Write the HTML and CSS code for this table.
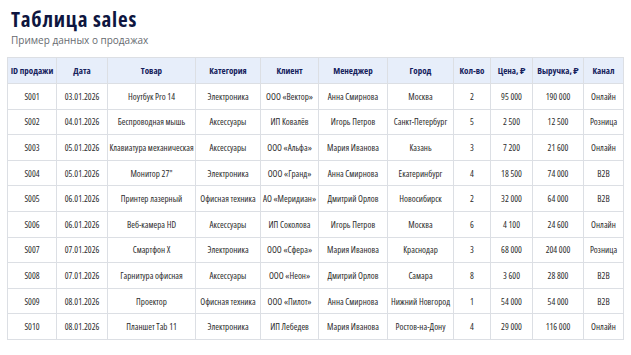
FILE: index.html
```html
<!DOCTYPE html>
<html lang="ru">
<head>
<meta charset="utf-8">
<title>Таблица sales</title>
<link rel="stylesheet" href="styles.css">
</head>
<body>
<header class="page-head">
  <h1 class="title">Таблица sales</h1>
  <p class="subtitle">Пример данных о продажах</p>
</header>
<table class="sales">
  <colgroup>
    <col class="c-id"><col class="c-date"><col class="c-item"><col class="c-cat"><col class="c-client"><col class="c-mgr"><col class="c-city"><col class="c-qty"><col class="c-price"><col class="c-rev"><col class="c-chan">
  </colgroup>
  <thead>
    <tr><th>ID продажи</th><th>Дата</th><th>Товар</th><th>Категория</th><th>Клиент</th><th>Менеджер</th><th>Город</th><th>Кол-во</th><th>Цена, ₽</th><th>Выручка, ₽</th><th>Канал</th></tr>
  </thead>
  <tbody>
    <tr><td>S001</td><td>03.01.2026</td><td>Ноутбук Pro 14</td><td>Электроника</td><td>ООО «Вектор»</td><td>Анна Смирнова</td><td>Москва</td><td>2</td><td>95 000</td><td>190 000</td><td>Онлайн</td></tr>
    <tr><td>S002</td><td>04.01.2026</td><td>Беспроводная мышь</td><td>Аксессуары</td><td>ИП Ковалёв</td><td>Игорь Петров</td><td>Санкт-Петербург</td><td>5</td><td>2 500</td><td>12 500</td><td>Розница</td></tr>
    <tr><td>S003</td><td>05.01.2026</td><td>Клавиатура механическая</td><td>Аксессуары</td><td>ООО «Альфа»</td><td>Мария Иванова</td><td>Казань</td><td>3</td><td>7 200</td><td>21 600</td><td>Онлайн</td></tr>
    <tr><td>S004</td><td>05.01.2026</td><td>Монитор 27"</td><td>Электроника</td><td>ООО «Гранд»</td><td>Анна Смирнова</td><td>Екатеринбург</td><td>4</td><td>18 500</td><td>74 000</td><td>B2B</td></tr>
    <tr><td>S005</td><td>06.01.2026</td><td>Принтер лазерный</td><td>Офисная техника</td><td>АО «Меридиан»</td><td>Дмитрий Орлов</td><td>Новосибирск</td><td>2</td><td>32 000</td><td>64 000</td><td>B2B</td></tr>
    <tr><td>S006</td><td>06.01.2026</td><td>Веб-камера HD</td><td>Аксессуары</td><td>ИП Соколова</td><td>Игорь Петров</td><td>Москва</td><td>6</td><td>4 100</td><td>24 600</td><td>Онлайн</td></tr>
    <tr><td>S007</td><td>07.01.2026</td><td>Смартфон X</td><td>Электроника</td><td>ООО «Сфера»</td><td>Мария Иванова</td><td>Краснодар</td><td>3</td><td>68 000</td><td>204 000</td><td>Розница</td></tr>
    <tr><td>S008</td><td>07.01.2026</td><td>Гарнитура офисная</td><td>Аксессуары</td><td>ООО «Неон»</td><td>Дмитрий Орлов</td><td>Самара</td><td>8</td><td>3 600</td><td>28 800</td><td>B2B</td></tr>
    <tr><td>S009</td><td>08.01.2026</td><td>Проектор</td><td>Офисная техника</td><td>ООО «Пилот»</td><td>Анна Смирнова</td><td>Нижний Новгород</td><td>1</td><td>54 000</td><td>54 000</td><td>B2B</td></tr>
    <tr><td>S010</td><td>08.01.2026</td><td>Планшет Tab 11</td><td>Электроника</td><td>ИП Лебедев</td><td>Мария Иванова</td><td>Ростов-на-Дону</td><td>4</td><td>29 000</td><td>116 000</td><td>Онлайн</td></tr>
  </tbody>
</table>
</body>
</html>
```
FILE: styles.css
```css
html, body {
  margin: 0;
  padding: 0;
  background: #ffffff;
}
body {
  font-family: "Open Sans", "Noto Sans", "DejaVu Sans", sans-serif;
  padding: 6px 0 0 0;
}
.page-head {
  padding-left: 11px;
}
.title {
  margin: 0;
  font-size: 21px;
  line-height: 26px;
  font-weight: 700;
  font-stretch: 75%;
  letter-spacing: 0.8px;
  color: #0e1640;
}
.subtitle {
  margin: 1px 0 0 0;
  font-size: 10px;
  line-height: 14px;
  color: #666a70;
}
.sales {
  margin: 10px 0 0 7px;
  width: 616px;
  table-layout: fixed;
  border-collapse: collapse;
  border: 1px solid #cfd3da;
  font-size: 9px;
  font-stretch: 75%;
  color: #2b2b2b;
}
.c-id { width: 49px; }
.c-date { width: 51px; }
.c-item { width: 88px; }
.c-cat { width: 65px; }
.c-client { width: 58px; }
.c-mgr { width: 69px; }
.c-city { width: 66px; }
.c-qty { width: 37px; }
.c-price { width: 42px; }
.c-rev { width: 51px; }
.c-chan { width: 40px; }
.sales th, .sales td {
  border: 1px solid #dcdfe4;
  padding: 0;
  text-align: center;
  white-space: nowrap;
  overflow: hidden;
}
.sales thead tr {
  height: 26px;
}
.sales th {
  background: #e7eefa;
  color: #15215c;
  font-weight: 700;
  font-size: 9px;
}
.sales tbody tr {
  height: 25.6px;
}
```
